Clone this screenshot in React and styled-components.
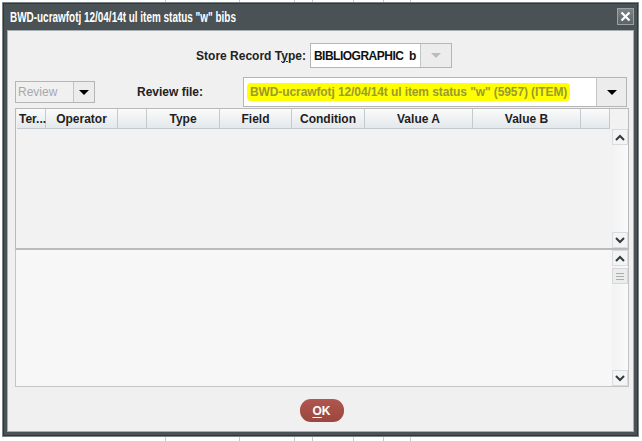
import styled, { createGlobalStyle } from "styled-components";

const GlobalStyle = createGlobalStyle`
    html, body {
        margin: 0;
        padding: 0;
        width: 642px;
        height: 441px;
        overflow: hidden;
        background-color: #ffffff;
        background-image:
            linear-gradient(90deg, transparent 165px, #c8c8c8 165px, #c8c8c8 166px, transparent 166px),
            linear-gradient(90deg, transparent 239px, #c8c8c8 239px, #c8c8c8 240px, transparent 240px),
            linear-gradient(90deg, transparent 312px, #c8c8c8 312px, #c8c8c8 313px, transparent 313px),
            linear-gradient(90deg, transparent 353px, #c8c8c8 353px, #c8c8c8 354px, transparent 354px),
            linear-gradient(90deg, transparent 410px, #c8c8c8 410px, #c8c8c8 411px, transparent 411px),
            linear-gradient(90deg, transparent 294px, #c8c8c8 294px, #c8c8c8 295px, transparent 295px),
            linear-gradient(90deg, transparent 383px, #c8c8c8 383px, #c8c8c8 384px, transparent 384px);
        font-family: "Liberation Sans", Arial, sans-serif;
    }
`;

const Dialog = styled.div`
    margin: 2px 3px 0 2px;
    height: 435px;
    box-sizing: border-box;
    background: #4a5255;
    border: 1px solid #7c8588;
    box-shadow: inset 0 0 0 1px #30373a;
    padding: 0 4px 4px 4px;
    display: flex;
    flex-direction: column;
`;

const TitleBar = styled.div`
    height: 27px;
    display: flex;
    align-items: center;
    justify-content: space-between;
    padding: 0 0 0 3px;
    color: #ffffff;
    font-size: 14px;
    font-weight: bold;
`;

const TitleText = styled.span`
    display: inline-block;
    white-space: nowrap;
    transform: scaleX(0.71);
    transform-origin: left center;
`;

const CloseButton = styled.div`
    width: 17px;
    height: 17px;
    box-sizing: border-box;
    border: 1px solid #9aa2a5;
    background: linear-gradient(#7d8487, #5c6366);
    display: flex;
    align-items: center;
    justify-content: center;
`;

const Content = styled.div`
    flex: 1;
    background: #f0f0f0;
    border: 1px solid #a7afb2;
    padding: 12px 4px 0 7px;
    display: flex;
    flex-direction: column;
    font-size: 12px;
    font-weight: bold;
    color: #1a1a1a;
`;

const StoreRow = styled.div`
    display: flex;
    align-items: center;
    justify-content: center;
    gap: 4px;
    padding-left: 4px;
    height: 25px;
`;

const Label = styled.span`
    font-size: 12px;
    font-weight: bold;
    color: #222;
    width: ${(p) => p.w || "auto"};
`;

const Combo = styled.div`
    display: flex;
    height: ${(p) => p.h || 25}px;
    width: ${(p) => p.w}px;
    box-sizing: border-box;
    border: 1px solid #b5b5b5;
    background: ${(p) => (p.disabled ? "#f0f0f0" : "#ffffff")};
`;

const ComboField = styled.div`
    flex: 1;
    display: flex;
    align-items: center;
    padding-left: ${(p) => p.pad || 3}px;
    font-weight: ${(p) => (p.plain ? "normal" : "bold")};
    color: ${(p) => (p.disabled ? "#a8a8a8" : "#111")};
    font-size: 12px;
    letter-spacing: ${(p) => p.tight || 0}px;
    white-space: pre;
    background: ${(p) => (p.disabled ? "#f0f0f0" : "#ffffff")};
`;

const ComboButton = styled.div`
    width: ${(p) => p.w || 29}px;
    border-left: 1px solid #c4c4c4;
    background: #ececec;
    display: flex;
    align-items: center;
    justify-content: center;
`;

const Arrow = styled.div`
    width: 0;
    height: 0;
    border-left: 5px solid transparent;
    border-right: 5px solid transparent;
    border-top: 5px solid ${(p) => (p.disabled ? "#b8bcbe" : "#000")};
`;

const ReviewRow = styled.div`
    display: flex;
    align-items: center;
    margin-top: 9px;
    height: 30px;
`;

const Highlight = styled.span`
    background: #ffff00;
    color: #9a9a30;
    padding: 2px 3px 2px 3px;
    border-radius: 4px;
    letter-spacing: -0.1px;
`;

const TablePane = styled.div`
    margin-top: 1px;
    height: 141px;
    box-sizing: border-box;
    border: 1px solid #b9b9b9;
    display: flex;
    background: #f2f2f2;
`;

const TableMain = styled.div`
    flex: 1;
    display: flex;
    flex-direction: column;
`;

const HeaderRow = styled.div`
    display: flex;
    height: 20px;
    padding-left: 1px;
`;

const HeaderCell = styled.div`
    width: ${(p) => p.w}px;
    box-sizing: border-box;
    border-right: 1px solid #c3c9cc;
    border-bottom: 1px solid #c3c9cc;
    background: linear-gradient(#fafbfb, #e3e8ea);
    display: flex;
    align-items: center;
    justify-content: ${(p) => (p.left ? "flex-start" : "center")};
    padding-left: ${(p) => (p.left ? 2 : 0)}px;
    font-size: 12px;
    font-weight: bold;
    color: #1e1e1e;
    white-space: nowrap;
`;

const ScrollColumn = styled.div`
    width: 16px;
    display: flex;
    flex-direction: column;
    padding-top: ${(p) => p.top || 0}px;
`;

const Track = styled.div`
    flex: 1;
    background: linear-gradient(90deg, #f2f2f2, #fafafa);
    display: flex;
    flex-direction: column;
    align-items: center;
`;

const ScrollButton = styled.div`
    width: 16px;
    height: 16px;
    box-sizing: border-box;
    border: 1px solid #d8dcde;
    background: #f4f4f4;
    display: flex;
    align-items: center;
    justify-content: center;
`;

const Thumb = styled.div`
    margin-top: 2px;
    width: 16px;
    height: 16px;
    box-sizing: border-box;
    border: 1px solid #d4d8da;
    background: #ececec;
    display: flex;
    flex-direction: column;
    align-items: center;
    justify-content: center;
    gap: 2px;
    & > span {
        width: 8px;
        height: 1px;
        background: #a8aeb0;
    }
`;

const LowerPane = styled.div`
    height: 138px;
    box-sizing: border-box;
    border: 1px solid #c4c4c4;
    border-top: 1px solid #bcbcbc;
    background: #f7f7f7;
    display: flex;
    justify-content: flex-end;
`;

const Footer = styled.div`
    display: flex;
    justify-content: center;
    padding-top: 12px;
    padding-right: 1px;
`;

const OkButton = styled.button`
    width: 44px;
    height: 23px;
    border: none;
    border-radius: 11px;
    background: linear-gradient(#b0574e, #9a463e);
    color: #ffffff;
    font-family: "Liberation Sans", Arial, sans-serif;
    font-size: 12px;
    font-weight: bold;
    padding: 0;
    & > u {
        text-underline-offset: 2px;
    }
`;

const Chevron = ({ up }) => (
    <svg width="10" height="7" viewBox="0 0 10 7">
        <path d={up ? "M1 6 L5 2 L9 6" : "M1 1 L5 5 L9 1"} stroke="#2f3b3d" strokeWidth="2" fill="none" />
    </svg>
);

const App = () => {
    const columns = [
        { name: "Ter...", w: 29, left: true },
        { name: "Operator", w: 72 },
        { name: "", w: 29 },
        { name: "Type", w: 73 },
        { name: "Field", w: 72 },
        { name: "Condition", w: 73 },
        { name: "Value A", w: 108 },
        { name: "Value B", w: 108 },
        { name: "", w: 29 },
    ];

    return (
        <>
            <GlobalStyle />
            <Dialog>
                <TitleBar>
                    <TitleText>BWD-ucrawfotj 12/04/14t ul item status "w" bibs</TitleText>
                    <CloseButton>
                        <svg width="11" height="11" viewBox="0 0 11 11">
                            <path d="M1.5 1.5 L9.5 9.5 M9.5 1.5 L1.5 9.5" stroke="#ffffff" strokeWidth="2.2" />
                        </svg>
                    </CloseButton>
                </TitleBar>
                <Content>
                    <StoreRow>
                        <Label>Store Record T<u>y</u>pe:</Label>
                        <Combo w={142}>
                            <ComboField pad={3} tight={-0.5}>BIBLIOGRAPHIC  b</ComboField>
                            <ComboButton w={30}>
                                <Arrow disabled />
                            </ComboButton>
                        </Combo>
                    </StoreRow>
                    <ReviewRow>
                        <Combo w={80} h={22} disabled>
                            <ComboField disabled plain pad={2}>Review</ComboField>
                            <ComboButton w={20}>
                                <Arrow />
                            </ComboButton>
                        </Combo>
                        <Label w="106px" style={{ marginLeft: 42 }}>Review file:</Label>
                        <Combo w={384} h={30}>
                            <ComboField pad={0}>
                                <Highlight>BWD-ucrawfotj 12/04/14t ul item status "w" (5957) (ITEM)</Highlight>
                            </ComboField>
                            <ComboButton w={29}>
                                <Arrow />
                            </ComboButton>
                        </Combo>
                    </ReviewRow>
                    <TablePane>
                        <TableMain>
                            <HeaderRow>
                                {columns.map((c, i) => (
                                    <HeaderCell key={i} w={c.w} left={c.left}>{c.name}</HeaderCell>
                                ))}
                            </HeaderRow>
                        </TableMain>
                        <ScrollColumn top={20}>
                            <ScrollButton><Chevron up /></ScrollButton>
                            <Track />
                            <ScrollButton><Chevron /></ScrollButton>
                        </ScrollColumn>
                    </TablePane>
                    <LowerPane>
                        <ScrollColumn>
                            <ScrollButton><Chevron up /></ScrollButton>
                            <Track>
                                <Thumb><span /><span /><span /></Thumb>
                            </Track>
                            <ScrollButton><Chevron /></ScrollButton>
                        </ScrollColumn>
                    </LowerPane>
                    <Footer>
                        <OkButton><u>O</u>K</OkButton>
                    </Footer>
                </Content>
            </Dialog>
        </>
    );
};

export default App;
